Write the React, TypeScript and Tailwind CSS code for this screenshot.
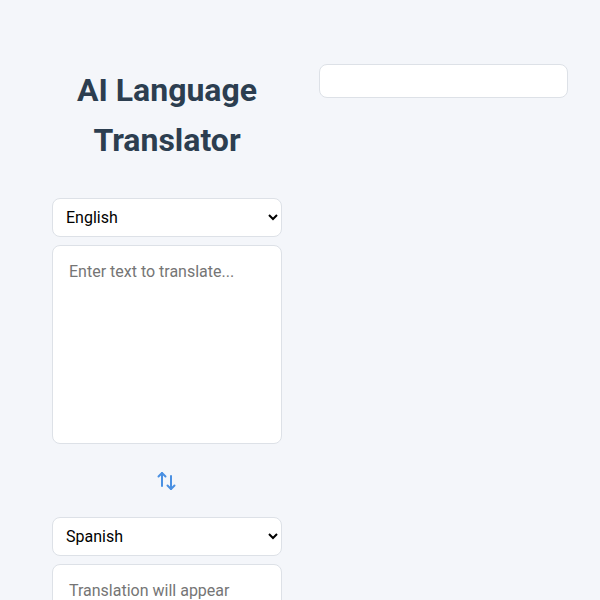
import React from "react";

function SwapIcon() {
  return (
    <svg width="22" height="20" viewBox="0 0 22 20" fill="none" stroke="#4a90e2" strokeWidth="2" strokeLinecap="round" strokeLinejoin="round">
      <path d="M6 15V2" />
      <path d="M2.5 5.5L6 2l3.5 3.5" />
      <path d="M15 5v13" />
      <path d="M11.5 14.5L15 18l3.5-3.5" />
    </svg>
  );
}

export default function App() {
  return (
    <div className="min-h-[600px] bg-[#f4f6fa] flex gap-[37px] pl-[52px] pr-[32px] pt-[64px]" style={{ fontFamily: "Roboto, 'Noto Sans', sans-serif" }}>
      <div className="w-[230px] flex flex-col">
        <h1 className="text-center text-[32px] leading-[50px] font-bold text-[#2c3e50] mt-[1px]">
          AI Language Translator
        </h1>
        <div className="mt-[33px] flex flex-col gap-[8px]">
          <select className="h-[39px] w-full rounded-[8px] border border-[#dde1e7] bg-white px-[9px] text-[16px] text-black outline-none">
            <option>English</option>
          </select>
          <textarea
            className="h-[199px] w-full resize-none rounded-[8px] border border-[#dde1e7] bg-white px-[16px] py-[14px] text-[16px] text-black placeholder:text-[#757575] outline-none"
            placeholder="Enter text to translate..."
          />
        </div>
        <div className="flex justify-center h-[73px] items-center">
          <SwapIcon />
        </div>
        <div className="flex flex-col gap-[8px]">
          <select className="h-[39px] w-full rounded-[8px] border border-[#dde1e7] bg-white px-[9px] text-[16px] text-black outline-none">
            <option>Spanish</option>
          </select>
          <div className="h-[199px] w-full rounded-[8px] border border-[#dde1e7] bg-white px-[16px] py-[14px] text-[16px] leading-[24px] text-[#757575]">
            Translation will appear here...
          </div>
        </div>
      </div>
      <div className="w-[249px]">
        <div className="h-[34px] w-full rounded-[8px] border border-[#dde1e7] bg-white" />
      </div>
    </div>
  );
}
